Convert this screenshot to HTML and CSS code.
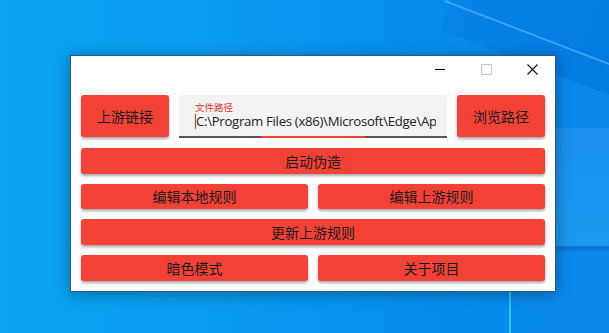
FILE: index.html
```html
<!DOCTYPE html>
<html lang="zh-CN">
<head>
<meta charset="utf-8">
<title>上游伪造</title>
<link rel="stylesheet" href="styles.css">
</head>
<body>
<div class="desktop">
  <div class="wall wall-dark"></div>
  <div class="wall wall-streak"></div>
  <div class="wall wall-panel"></div>
  <div class="wall wall-band"></div>
  <div class="wall wall-vline"></div>
  <div class="window">
    <div class="titlebar">
      <div class="cap"><span class="ic-min"></span></div>
      <div class="cap"><span class="ic-max"></span></div>
      <div class="cap">
        <svg class="ic-close" width="11" height="11" viewBox="0 0 11 11"><path d="M0.5 0.5 L10.5 10.5 M10.5 0.5 L0.5 10.5" stroke="#111" stroke-width="1.1" fill="none"/></svg>
      </div>
    </div>
    <div class="content">
      <div class="row row-top">
        <button class="btn btn-side">上游链接</button>
        <div class="field">
          <span class="field-label">文件路径</span>
          <span class="field-value"><span class="caret"></span>C:\Program Files (x86)\Microsoft\Edge\Application\msedge.exe</span>
          <span class="underline"></span>
        </div>
        <button class="btn btn-side">浏览路径</button>
      </div>
      <button class="btn btn-full">启动伪造</button>
      <div class="row row-half">
        <button class="btn">编辑本地规则</button>
        <button class="btn">编辑上游规则</button>
      </div>
      <button class="btn btn-full">更新上游规则</button>
      <div class="row row-half">
        <button class="btn">暗色模式</button>
        <button class="btn">关于项目</button>
      </div>
    </div>
  </div>
</div>
</body>
</html>
```
FILE: styles.css
```css
html, body {
  margin: 0;
  padding: 0;
}
body {
  width: 609px;
  height: 333px;
  overflow: hidden;
  font-family: "Noto Sans CJK SC", "Noto Sans", sans-serif;
}
.desktop {
  position: relative;
  width: 609px;
  height: 333px;
  box-sizing: border-box;
  padding: 55px 0 0 70px;
  background: linear-gradient(90deg, #0aa4f1 0%, #0a9cf0 35%, #0590ee 65%, #0a86e8 100%);
  overflow: hidden;
}
.wall {
  position: absolute;
}
.wall-dark {
  left: 440px;
  top: -120px;
  width: 300px;
  height: 150px;
  background: linear-gradient(90deg, #0684e8, #0074dc);
  transform: rotate(21deg);
  transform-origin: 0 100%;
}
.wall-streak {
  left: 445px;
  top: 0;
  width: 200px;
  height: 2px;
  background: rgba(120, 200, 255, 0.5);
  transform: rotate(21deg);
  transform-origin: 0 0;
}
.wall-panel {
  left: 556px;
  top: 128px;
  width: 60px;
  height: 120px;
  background: linear-gradient(180deg, #1a92ee, #1c98f0);
}
.wall-band {
  left: 556px;
  top: 246px;
  width: 60px;
  height: 5px;
  background: #0a78d6;
}
.wall-vline {
  left: 509px;
  top: 292px;
  width: 2px;
  height: 50px;
  background: #38c0f8;
}
.window {
  position: relative;
  width: 486px;
  height: 237px;
  box-sizing: border-box;
  border: 1px solid #2a5b80;
  background: #ffffff;
  box-shadow: 0 2px 14px rgba(0, 0, 0, 0.35);
  display: flex;
  flex-direction: column;
}
.titlebar {
  height: 27px;
  display: flex;
  justify-content: flex-end;
}
.cap {
  width: 46px;
  display: flex;
  align-items: center;
  justify-content: center;
}
.ic-min {
  width: 10px;
  height: 1px;
  background: #111;
}
.ic-max {
  width: 9px;
  height: 9px;
  border: 1px solid #c8c8c8;
}
.content {
  padding: 12px 10px 10px;
  display: flex;
  flex-direction: column;
  gap: 10px;
}
.row {
  display: flex;
  gap: 10px;
}
.row-top {
  height: 43px;
  align-items: flex-start;
}
.btn {
  border: none;
  margin: 0;
  padding: 0;
  background: #f44336;
  color: #1a1a1a;
  font-family: "Noto Sans CJK SC", "Noto Sans", sans-serif;
  font-size: 14px;
  border-radius: 3px;
  box-shadow: 0 2px 3px rgba(0, 0, 0, 0.35);
  height: 25.67px;
  line-height: 20px;
}
.btn-side {
  width: 88px;
  height: 42px;
  flex: none;
}
.btn-full {
  width: 100%;
}
.row-half .btn {
  flex: 1;
}
.field {
  flex: 1;
  height: 43px;
  box-sizing: border-box;
  background: #f3f3f3;
  border-radius: 3px 3px 0 0;
  padding: 7px 11px 0 16px;
  display: flex;
  flex-direction: column;
  min-width: 0;
}
.field-label {
  font-size: 9.5px;
  line-height: 10px;
  color: #e8352a;
}
.field-value {
  font-family: "Open Sans", "Noto Sans", sans-serif;
  font-size: 13.2px;
  line-height: 18px;
  color: #222;
  white-space: nowrap;
  overflow: hidden;
  letter-spacing: -0.3px;
}
.caret {
  display: inline-block;
  width: 1px;
  height: 15px;
  background: #e8352a;
  vertical-align: -3px;
}
.underline {
  margin: auto -11px 0 -16px;
  height: 2px;
  background: linear-gradient(90deg, #555 0, #555 82px, #f44336 82px, #f44336 186px, #555 186px);
}
```
